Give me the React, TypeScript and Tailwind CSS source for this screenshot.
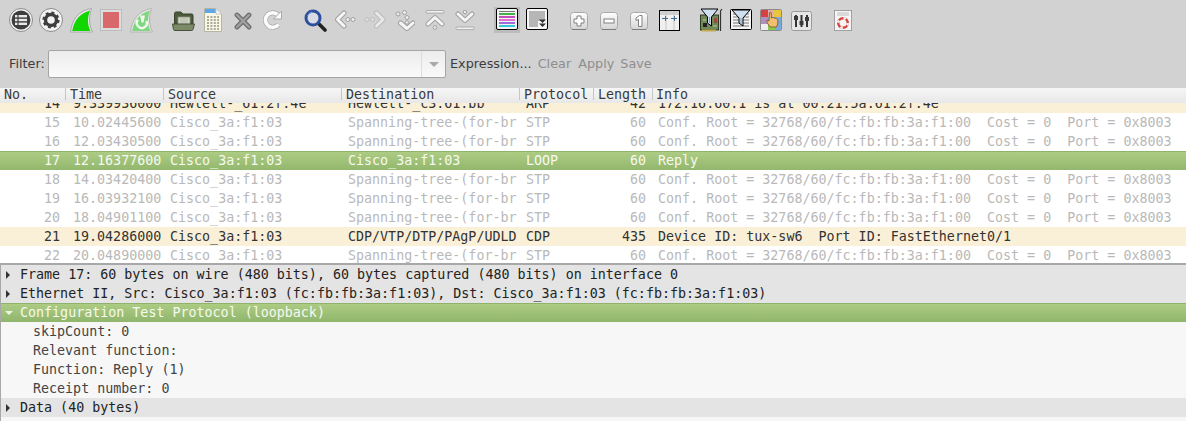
import React from 'react';

const MONO = "font-['DejaVu_Sans_Mono',monospace] text-[13.33px]";

const cols = {
  no: 'w-[66px] shrink-0 text-right pr-[6px]',
  time: 'w-[98px] shrink-0 pl-[7px]',
  source: 'w-[178px] shrink-0 pl-[6px]',
  dest: 'w-[178px] shrink-0 pl-[6px]',
  proto: 'w-[74px] shrink-0 pl-[6px]',
  len: 'w-[59px] shrink-0 text-right pr-[7px]',
  info: 'flex-1 pl-[5px]',
};

const STP = 'Conf. Root = 32768/60/fc:fb:fb:3a:f1:00  Cost = 0  Port = 0x8003';
const SRC = 'Cisco_3a:f1:03';
const DST = 'Spanning-tree-(for-br';

const packets = [
  { no: '14', time: '9.339936000', src: 'Hewlett-_61:2f:4e', dst: 'Hewlett-_c3:61:bb', proto: 'ARP', len: '42', info: '172.16.60.1 is at 00:21:5a:61:2f:4e', kind: 'warm' },
  { no: '15', time: '10.02445600', src: SRC, dst: DST, proto: 'STP', len: '60', info: STP, kind: 'dim' },
  { no: '16', time: '12.03430500', src: SRC, dst: DST, proto: 'STP', len: '60', info: STP, kind: 'dim' },
  { no: '17', time: '12.16377600', src: SRC, dst: SRC, proto: 'LOOP', len: '60', info: 'Reply', kind: 'sel' },
  { no: '18', time: '14.03420400', src: SRC, dst: DST, proto: 'STP', len: '60', info: STP, kind: 'dim' },
  { no: '19', time: '16.03932100', src: SRC, dst: DST, proto: 'STP', len: '60', info: STP, kind: 'dim' },
  { no: '20', time: '18.04901100', src: SRC, dst: DST, proto: 'STP', len: '60', info: STP, kind: 'dim' },
  { no: '21', time: '19.04286000', src: SRC, dst: 'CDP/VTP/DTP/PAgP/UDLD', proto: 'CDP', len: '435', info: 'Device ID: tux-sw6  Port ID: FastEthernet0/1', kind: 'warm' },
  { no: '22', time: '20.04890000', src: SRC, dst: DST, proto: 'STP', len: '60', info: STP, kind: 'dim' },
];

const rowStyle: Record<string, string> = {
  warm: 'bg-[#faf0d8] text-[#333333]',
  dim: 'bg-white text-[#b9b9b9]',
  sel: 'bg-gradient-to-b from-[#aecd85] to-[#93b76e] shadow-[inset_0_1px_0_#8fb36c] text-[#f6f9ef]',
};

const GlossyKey = ({ children }: { children: React.ReactNode }) => (
  <svg width="18" height="18" viewBox="0 0 18 18">
    <defs>
      <linearGradient id="key" x1="0" y1="0" x2="0" y2="1">
        <stop offset="0" stopColor="#ffffff" />
        <stop offset="1" stopColor="#d4d4d4" />
      </linearGradient>
    </defs>
    <rect x="0.5" y="0.5" width="17" height="17" rx="3" fill="url(#key)" stroke="#a8a8a8" />
    <path d="M2 17.5h14" stroke="#7c7c7c" />
    {children}
  </svg>
);

// white chevron with a soft grey edge, used by the go-to buttons
const Chevron = ({ d, light }: { d: string; light?: boolean }) => (
  <>
    <path d={d} fill="none" stroke={light ? '#bcbcbc' : '#a0a0a0'} strokeWidth="5" strokeLinejoin="round" strokeLinecap="round" />
    <path d={d} fill="none" stroke={light ? '#e8e8e8' : '#f6f6f6'} strokeWidth="3" strokeLinejoin="round" strokeLinecap="round" />
  </>
);

const Dot = ({ x, y, light, r = 2 }: { x: number; y: number; light?: boolean; r?: number }) => (
  <circle cx={x} cy={y} r={r} fill={light ? '#dedede' : '#ededed'} stroke={light ? '#bdbdbd' : '#a0a0a0'} />
);

const Icons: Record<string, React.ReactNode> = {
  list: (
    <svg width="24" height="24" viewBox="0 0 24 24">
      <circle cx="12" cy="12" r="11.5" fill="#f2f2f2" stroke="#8a8a8a" />
      <circle cx="12" cy="12" r="9.5" fill="#3d3d3d" />
      <rect x="6" y="7" width="2.4" height="2.4" fill="#e8e8e8" />
      <rect x="6" y="10.8" width="2.4" height="2.4" fill="#e8e8e8" />
      <rect x="6" y="14.6" width="2.4" height="2.4" fill="#e8e8e8" />
      <rect x="9.6" y="7" width="8.4" height="2.4" fill="#e8e8e8" />
      <rect x="9.6" y="10.8" width="8.4" height="2.4" fill="#e8e8e8" />
      <rect x="9.6" y="14.6" width="8.4" height="2.4" fill="#e8e8e8" />
    </svg>
  ),
  gear: (
    <svg width="24" height="24" viewBox="0 0 24 24">
      <circle cx="12" cy="12" r="11.5" fill="#f2f2f2" stroke="#8a8a8a" />
      <circle cx="12" cy="12" r="5.5" fill="none" stroke="#3d3d3d" strokeWidth="3.4" />
      <circle cx="12" cy="12" r="7.6" fill="none" stroke="#3d3d3d" strokeWidth="2" strokeDasharray="3 3" />
    </svg>
  ),
  fin: (
    <svg width="23" height="25" viewBox="0 0 23 25">
      <path d="M0.5 24C2 11 9 2.5 21.5 0.5 19 8 18.5 16 22.5 24Z" fill="#e8e8e8" stroke="#a8a8a8" />
      <path d="M2.2 23C4 12 10.5 5 20 2.5 17.5 9 17 16 20.5 23Z" fill="#12d600" />
    </svg>
  ),
  stop: (
    <svg width="22" height="22" viewBox="0 0 22 22">
      <rect x="0.5" y="0.5" width="21" height="21" fill="#dddddd" stroke="#bcbcbc" />
      <rect x="3" y="3" width="16" height="16" fill="#d9686a" />
    </svg>
  ),
  restart: (
    <svg width="23" height="25" viewBox="0 0 23 25">
      <path d="M0.5 24C2 11 9 2.5 21.5 0.5 19 8 18.5 16 22.5 24Z" fill="#e4e4e4" stroke="#b5b5b5" />
      <path d="M2.2 23C4 12 10.5 5 20 2.5 17.5 9 17 16 20.5 23Z" fill="#7fd67f" />
      <path d="M16.4 13A5 5 0 1 1 8 11.8" fill="none" stroke="#eef9ec" strokeWidth="2.4" />
      <path d="M10 7.5h5l-1.5 7h-2Z" fill="#eef9ec" />
    </svg>
  ),
  folder: (
    <svg width="23" height="20" viewBox="0 0 23 20">
      <path d="M2.5 2.5Q2.5 1 4 1h5l2 2h9q1 0 1 1.5V13H2.5Z" fill="#4c5a3c" stroke="#39432d" />
      <rect x="6" y="6" width="12" height="8" fill="#e8ebe0" stroke="#7e8873" />
      <path d="M7.5 8h9M7.5 10h9M7.5 12h9" stroke="#9aa28e" />
      <path d="M0.5 13h22l-1.5 5.5q-.2 1-1.5 1H3q-1.3 0-1.5-1Z" fill="#7c8a68" stroke="#46513a" />
    </svg>
  ),
  file: (
    <svg width="18" height="24" viewBox="0 0 18 24">
      <path d="M0.5 0.5H12L17.5 6V23.5H0.5Z" fill="#f8f7e4" stroke="#b5b5a5" />
      <path d="M1 1H12L14 3V5H1Z" fill="#5ea7e8" />
      <path d="M12 .5V6H17.5Z" fill="#ffffff" stroke="#c5c5c5" />
      <path d="M3 9h12M3 12h12M3 15h12M3 18h12M3 21h12" stroke="#8f9180" strokeWidth="1.6" strokeDasharray="2 1.4" />
    </svg>
  ),
  close: (
    <svg width="18" height="18" viewBox="0 0 18 18">
      <path d="M3 3 15 15M15 3 3 15" stroke="#6e6e6e" strokeWidth="4.8" strokeLinecap="round" />
      <path d="M3 3 15 15M15 3 3 15" stroke="#a0a0a0" strokeWidth="2.4" strokeLinecap="round" />
    </svg>
  ),
  reload: (
    <svg width="20" height="20" viewBox="0 0 20 20">
      <path d="M15.5 14.5A7.3 7.3 0 1 1 15 5" fill="none" stroke="#a9a9a9" strokeWidth="5" />
      <path d="M15.5 14.5A7.3 7.3 0 1 1 15 5" fill="none" stroke="#fbfbfb" strokeWidth="3.6" />
      <path d="M18.5 1V9H10.5Z" fill="#fbfbfb" stroke="#a9a9a9" />
    </svg>
  ),
  search: (
    <svg width="23" height="23" viewBox="0 0 23 23">
      <path d="M14.5 14.5 21 21" stroke="#222222" strokeWidth="3.6" strokeLinecap="round" />
      <circle cx="9" cy="9" r="7" fill="#dce6f5" fillOpacity="0.5" stroke="#2c4f9e" strokeWidth="3" />
      <path d="M3.5 7A6 6 0 0 1 8 3" stroke="#7fa0dc" fill="none" />
    </svg>
  ),
  back: (
    <svg width="22" height="20" viewBox="0 0 22 20">
      <Chevron d="M10 3 3.5 9.5 10 16" />
      <Dot x={13.8} y={9.5} />
      <Dot x={19} y={9.5} />
    </svg>
  ),
  forward: (
    <svg width="22" height="20" viewBox="0 0 22 20">
      <Dot x={3} y={9.5} light />
      <Dot x={8.5} y={9.5} light />
      <Chevron d="M12.5 3 19 9.5 12.5 16" light />
    </svg>
  ),
  goto: (
    <svg width="20" height="21" viewBox="0 0 20 21">
      <Dot x={3} y={4} />
      <Dot x={9.5} y={2.5} />
      <Dot x={12} y={7.5} />
      <Chevron d="M5.5 13 12 18.5 18 13" />
      <Dot x={12} y={12.5} r={1.7} />
    </svg>
  ),
  top: (
    <svg width="20" height="21" viewBox="0 0 20 21">
      <rect x="1" y="0.5" width="18" height="2.6" rx="1" fill="#f0f0f0" stroke="#a0a0a0" strokeWidth="0.8" />
      <Chevron d="M3 14 10 7.5 17 14" />
      <Dot x={10} y={17.5} r={1.8} />
    </svg>
  ),
  bottom: (
    <svg width="20" height="21" viewBox="0 0 20 21">
      <Chevron d="M3 4 10 10.5 17 4" />
      <Dot x={10} y={2} r={1.8} />
      <rect x="1" y="17" width="18" height="2.6" rx="1" fill="#f0f0f0" stroke="#a0a0a0" strokeWidth="0.8" />
    </svg>
  ),
  colorize: (
    <svg width="22" height="22" viewBox="0 0 22 22">
      <rect x="0.5" y="0.5" width="21" height="21" rx="1.5" fill="#f4f4f4" stroke="#000000" />
      <rect x="3" y="3" width="16" height="1" fill="#7a7a7a" />
      <rect x="3" y="5" width="16" height="2" fill="#46b04a" />
      <rect x="3" y="8" width="16" height="2" fill="#c44fb8" />
      <rect x="3" y="11" width="16" height="2" fill="#e070d0" />
      <rect x="3" y="14" width="16" height="2" fill="#9a70d8" />
      <rect x="3" y="17" width="16" height="2" fill="#35c8d8" />
    </svg>
  ),
  autoscroll: (
    <svg width="22" height="22" viewBox="0 0 22 22">
      <rect x="0.5" y="0.5" width="21" height="21" rx="1.5" fill="#f6f6f6" stroke="#000000" />
      <path d="M3 4h16M3 6h16M3 8h16M3 10h16M3 12h16M3 14h9M3 16h9M3 18h9" stroke="#777777" />
      <path d="M13 11.5h7l-3.5 3.5ZM13 15.5h7L16.5 19Z" fill="#333333" />
    </svg>
  ),
  zoomIn: (
    <GlossyKey>
      <path d="M7 4h4v3h3v4h-3v3H7v-3H4V7h3Z" fill="#ffffff" stroke="#808080" />
    </GlossyKey>
  ),
  zoomOut: (
    <GlossyKey>
      <rect x="4" y="7" width="10" height="4" fill="#ffffff" stroke="#808080" />
    </GlossyKey>
  ),
  zoomReset: (
    <GlossyKey>
      <path d="M6 6 9.5 3.5H12V14.5H8.5V7.5L6 8.5Z" fill="#ffffff" stroke="#808080" />
    </GlossyKey>
  ),
  resize: (
    <svg width="21" height="21" viewBox="0 0 21 21">
      <rect x="0.5" y="0.5" width="20" height="20" fill="#f0f0f0" stroke="#000000" />
      <rect x="1" y="1" width="19" height="4" fill="#cfcfcf" />
      <path d="M7 1v19M15 1v19" stroke="#c4c4c4" />
      <path d="M3 8.5h6M6.5 6v5" stroke="#3f6d94" />
      <path d="M12 8.5h6M15.5 6v5" stroke="#3f6d94" />
    </svg>
  ),
  capFilter: (
    <svg width="23" height="24" viewBox="0 0 23 24">
      <rect x="0.5" y="7" width="18" height="15" fill="#6f8a58" stroke="#2c3a22" />
      <rect x="2" y="21.5" width="14" height="2" fill="#c4a94e" />
      <rect x="3" y="15" width="4" height="4" fill="#222222" />
      <rect x="14" y="10" width="3" height="5" fill="#9a4a3a" />
      <path d="M3 12h3M13 18h4" stroke="#b5c8a0" />
      <path d="M20.5 23V3l1.5-2" fill="none" stroke="#333333" strokeWidth="1.2" />
      <path d="M1 1H18L11.5 9V18L7.5 15V9Z" fill="#cfdff0" stroke="#000000" />
      <path d="M9.5 9V15" stroke="#7f9fc0" />
    </svg>
  ),
  dispFilter: (
    <svg width="22" height="21" viewBox="0 0 22 21">
      <rect x="0.5" y="0.5" width="21" height="20" rx="1" fill="#f4f4f4" stroke="#000000" />
      <path d="M3 5h16M3 8h16M3 11h16M3 14h16M3 17h16" stroke="#777777" />
      <path d="M2 1H20L13 9V17L9 14V9Z" fill="#cfdff0" stroke="#000000" />
      <path d="M11 9V15" stroke="#7f9fc0" />
    </svg>
  ),
  coloring: (
    <svg width="22" height="22" viewBox="0 0 22 22">
      <rect x="0.5" y="0.5" width="21" height="21" rx="1" fill="#eeeeee" stroke="#8a8a8a" />
      <rect x="1" y="1" width="7" height="7" fill="#d94040" />
      <rect x="8" y="1" width="6" height="7" fill="#e0b0b0" />
      <rect x="14" y="1" width="7" height="7" fill="#ecc63a" />
      <rect x="1" y="8" width="7" height="7" fill="#b090c0" />
      <rect x="8" y="8" width="13" height="13" fill="#7aa8d8" />
      <rect x="8" y="15" width="7" height="6" fill="#8ac850" />
      <path d="M9.5 3.5q1.5-1 1.8.5V9l2-.5 3 1 1.5 1.5v4l-1.5 3H10L7 13.5V11l2 1Z" fill="#f0bf70" stroke="#8a5a20" strokeWidth="0.9" />
    </svg>
  ),
  prefs: (
    <svg width="21" height="20" viewBox="0 0 21 20">
      <rect x="0.5" y="0.5" width="20" height="19" rx="2" fill="#e6e6e6" stroke="#9a9a9a" />
      <path d="M5 4v12M10.5 4v12M16 4v12" stroke="#333333" strokeWidth="2" />
      <rect x="3" y="5" width="4" height="4" fill="#3a3a3a" />
      <rect x="8.5" y="10" width="4" height="4" fill="#3a3a3a" />
      <rect x="14" y="6" width="4" height="4" fill="#3a3a3a" />
    </svg>
  ),
  help: (
    <svg width="18" height="21" viewBox="0 0 18 21">
      <rect x="0.5" y="0.5" width="17" height="20" fill="#f5f5f5" stroke="#a0a0a0" />
      <path d="M3 3h12M3 5h12" stroke="#bebebe" />
      <circle cx="9" cy="13" r="4.8" fill="none" stroke="#d8423c" strokeWidth="2.4" />
      <circle cx="9" cy="13" r="4.8" fill="none" stroke="#f4f4f4" strokeWidth="2.4" strokeDasharray="2.5 5" />
    </svg>
  ),
};

// small nudges, the icons in the picture are not all on one centre line
const nudge: Record<string, string> = {
  folder: 'mt-[1px]',
  zoomIn: 'mt-[2px]',
  zoomOut: 'mt-[2px]',
  zoomReset: 'mt-[2px]',
  prefs: 'mt-[1px]',
  autoscroll: '-ml-[1px] -mt-[2px]',
  dispFilter: '-ml-[1px] -mt-[2px]',
  close: 'mt-[1px]',
};

const groups = [
  ['list', 'gear', 'fin', 'stop', 'restart'],
  ['folder', 'file', 'close', 'reload'],
  ['search', 'back', 'forward', 'goto', 'top', 'bottom'],
  ['colorize', 'autoscroll'],
  ['zoomIn', 'zoomOut', 'zoomReset', 'resize'],
  ['capFilter', 'dispFilter', 'coloring', 'prefs'],
  ['help'],
];

const Toolbar = () => (
  <div className="flex h-[40px] items-center gap-[12px] pl-[6px]">
    {groups.map((group, i) => (
      <div key={i} className="flex">
        {group.map((name) => (
          <div key={name} className="flex h-[26px] w-[30px] items-center justify-center">
            {name === 'colorize' ? (
              <div className="flex h-[26px] w-[26px] items-start justify-start bg-[#bcbcbc] pl-[2px] pt-[1px]">{Icons[name]}</div>
            ) : (
              <div className={nudge[name]}>{Icons[name]}</div>
            )}
          </div>
        ))}
      </div>
    ))}
  </div>
);

const FilterBar = () => (
  <div className="flex h-[48px] items-center font-['DejaVu_Sans',sans-serif] text-[12.8px] text-[#3c3c3c]">
    <span className="ml-[9px] w-[39px]">Filter:</span>
    <div className="flex h-[28px] w-[398px] rounded-[2px] border border-[#a5a5a5] bg-gradient-to-b from-[#ececec] to-[#fafafa]">
      <div className="flex-1" />
      <div className="flex w-[24px] items-center justify-center border-l border-[#dedede]">
        <div className="h-0 w-0 border-x-[5px] border-t-[5px] border-x-transparent border-t-[#a8a8a8]" />
      </div>
    </div>
    <span className="ml-[4px]">Expression...</span>
    <span className="ml-[6px] text-[#8e8e8e]">Clear</span>
    <span className="ml-[7px] text-[#8e8e8e]">Apply</span>
    <span className="ml-[6px] text-[#8e8e8e]">Save</span>
  </div>
);

const HeaderCell = ({ label, className }: { label: string; className: string }) => (
  <div className={`h-[12px] shrink-0 border-r border-[#c6c6c6] ${className}`}>{label}</div>
);

const ColumnHeader = () => (
  <div className={`flex h-[15px] items-start whitespace-pre bg-gradient-to-b from-[#f6f6f6] to-[#e8e8e8] leading-[13px] text-[#3a3a3a] ${MONO}`}>
    <HeaderCell label="No." className="w-[66px] pl-[4px]" />
    <HeaderCell label="Time" className="w-[98px] pl-[4px]" />
    <HeaderCell label="Source" className="w-[178px] pl-[4px]" />
    <HeaderCell label="Destination" className="w-[178px] pl-[4px]" />
    <HeaderCell label="Protocol" className="w-[74px] pl-[4px]" />
    <HeaderCell label="Length" className="w-[59px] pl-[4px]" />
    <div className="flex-1 pl-[3px]">Info</div>
  </div>
);

const PacketList = () => (
  <div className="h-[160px] overflow-hidden bg-white">
    <div className={`-mt-[9px] whitespace-pre ${MONO}`}>
      {packets.map((p) => (
        <div key={p.no} className={`flex h-[19px] items-center leading-[19px] ${rowStyle[p.kind]}`}>
          <div className={cols.no}>{p.no}</div>
          <div className={cols.time}>{p.time}</div>
          <div className={cols.source}>{p.src}</div>
          <div className={cols.dest}>{p.dst}</div>
          <div className={cols.proto}>{p.proto}</div>
          <div className={cols.len}>{p.len}</div>
          <div className={cols.info}>{p.info}</div>
        </div>
      ))}
    </div>
  </div>
);

const Caret = ({ open }: { open?: boolean }) =>
  open ? (
    <div className="h-0 w-0 border-x-[4px] border-t-[4px] border-x-transparent border-t-[#eef4e4]" />
  ) : (
    <div className="ml-[1px] h-0 w-0 border-y-[4px] border-l-[4px] border-y-transparent border-l-[#333333]" />
  );

const TreeRow = ({ label }: { label: string }) => (
  <div className="flex h-[19px] items-center gap-[7px] bg-[#e4e4e4] pl-[4px] text-[#222222]">
    <div className="w-[8px]">
      <Caret />
    </div>
    <span>{label}</span>
  </div>
);

const Leaf = ({ label }: { label: string }) => <div className="h-[19px] pl-[32px] leading-[19px] text-[#444444]">{label}</div>;

const DetailPane = () => (
  <div className={`flex-1 whitespace-pre border-t-2 border-l border-[#a8a8a8] bg-[#f7f7f7] ${MONO}`}>
    <TreeRow label="Frame 17: 60 bytes on wire (480 bits), 60 bytes captured (480 bits) on interface 0" />
    <TreeRow label="Ethernet II, Src: Cisco_3a:f1:03 (fc:fb:fb:3a:f1:03), Dst: Cisco_3a:f1:03 (fc:fb:fb:3a:f1:03)" />
    <div className="flex h-[19px] items-center gap-[7px] bg-gradient-to-b from-[#aecd85] to-[#90b56c] pl-[4px] text-[#f6f9ef] shadow-[inset_0_1px_0_#8fb36c]">
      <div className="w-[8px]">
        <Caret open />
      </div>
      <span>Configuration Test Protocol (loopback)</span>
    </div>
    <Leaf label="skipCount: 0" />
    <Leaf label="Relevant function:" />
    <Leaf label="Function: Reply (1)" />
    <Leaf label="Receipt number: 0" />
    <TreeRow label="Data (40 bytes)" />
  </div>
);

export default function App() {
  return (
    <div className="flex h-[421px] w-[1186px] flex-col overflow-hidden bg-[#d2d2d2]">
      <Toolbar />
      <FilterBar />
      <ColumnHeader />
      <PacketList />
      <DetailPane />
    </div>
  );
}
